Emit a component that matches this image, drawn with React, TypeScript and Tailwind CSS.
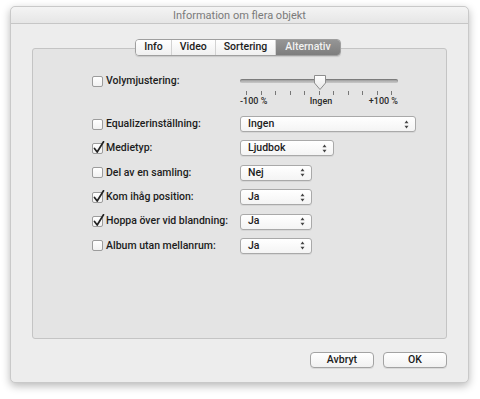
import React from "react";

const font = { fontFamily: "Roboto, 'Liberation Sans', sans-serif" };

function Checkbox({ checked }: { checked?: boolean }) {
  return (
    <span className="relative inline-block h-[11px] w-[11px] shrink-0 rounded-[2px] border border-[#9c9c9c] bg-gradient-to-b from-white to-[#f1f1f1]">
      {checked && (
        <svg className="absolute -top-[3px] left-[0px] h-[13px] w-[12px]" viewBox="0 0 12 13" fill="none">
          <path d="M1.5 7.5 L4.2 11 L10.5 0.8" stroke="#222" strokeWidth="1.7" strokeLinecap="round" strokeLinejoin="round" />
        </svg>
      )}
    </span>
  );
}

function Popup({ value, width }: { value: string; width: string }) {
  return (
    <div className={`flex h-[16px] items-center justify-between rounded-[3px] border border-[#a9a9a9] bg-gradient-to-b from-white to-[#f4f4f4] pl-[7px] pr-[6px] shadow-[0_1px_0_rgba(0,0,0,0.06)] ${width}`}>
      <span className="text-[10.5px] font-medium leading-none text-[#1c1c1c]">{value}</span>
      <svg width="5" height="9" viewBox="0 0 5 9">
        <path d="M2.5 0.5 L4.5 3.3 H0.5 Z" fill="#444" />
        <path d="M2.5 8.5 L4.5 5.7 H0.5 Z" fill="#444" />
      </svg>
    </div>
  );
}

function Row({ label, checked, children }: { label: string; checked?: boolean; children: React.ReactNode }) {
  return (
    <div className="flex h-[16px] items-center">
      <div className="flex w-[148px] items-center gap-[3px]">
        <Checkbox checked={checked} />
        <span className="text-[10.5px] font-medium leading-none text-[#1c1c1c]">{label}</span>
      </div>
      {children}
    </div>
  );
}

function Slider() {
  const ticks = Array.from({ length: 11 });
  return (
    <div className="flex w-[158px] flex-col">
      <div className="relative flex h-[16px] items-center">
        <div className="h-[4px] w-full rounded-full bg-gradient-to-b from-[#9a9a9a] to-[#c8c8c8] shadow-[inset_0_1px_1px_rgba(0,0,0,0.25)]" />
        <svg className="absolute left-[73px] top-[1px]" width="14" height="17" viewBox="0 0 14 17">
          <defs>
            <linearGradient id="thumb" x1="0" y1="0" x2="0" y2="1">
              <stop offset="0" stopColor="#ffffff" />
              <stop offset="1" stopColor="#e6e6e6" />
            </linearGradient>
          </defs>
          <path d="M1.5 1.5 H12.5 V9 L7 15.5 L1.5 9 Z" fill="url(#thumb)" stroke="#8d8d8d" strokeWidth="1" strokeLinejoin="round" />
        </svg>
      </div>
      <div className="mt-[2px] flex justify-between px-[6px]">
        {ticks.map((_, i) => (
          <span key={i} className="h-[4px] w-px bg-[#777]" />
        ))}
      </div>
      <div className="mt-[2px] flex justify-between text-[9px] font-medium leading-none text-[#2a2a2a]">
        <span>-100 %</span>
        <span className="pl-[6px]">Ingen</span>
        <span>+100 %</span>
      </div>
    </div>
  );
}

export default function App() {
  const tabs = ["Info", "Video", "Sortering", "Alternativ"];
  return (
    <div className="h-[399px] w-[480px] bg-white pl-[10px] pt-[6px]" style={font}>
      <div className="flex h-[377px] w-[459px] flex-col rounded-[5px] border border-[#c9c9c9] bg-[#ededed] shadow-[0_3px_9px_rgba(0,0,0,0.28)]">
        <div className="flex h-[17px] items-center justify-center rounded-t-[5px] border-b border-[#c6c6c6] bg-gradient-to-b from-[#f4f4f4] to-[#e6e6e6]">
          <span className="text-[11px] leading-none text-[#7a7a7a]">Information om flera objekt</span>
        </div>

        <div className="flex flex-1 flex-col px-[21px] pt-[24px]">
          <div className="flex h-[291px] flex-col rounded-[3px] border border-[#c4c4c4] bg-[#e4e4e4]">
            <div className="relative z-10 -mt-[10px] flex justify-center pr-[3px]">
              <div className="flex h-[17px] overflow-hidden rounded-[4px] border border-[#9f9f9f] shadow-[0_1px_1px_rgba(0,0,0,0.12)]">
                {tabs.map((t, i) => (
                  <div
                    key={t}
                    className={
                      i === 3
                        ? "flex items-center bg-gradient-to-b from-[#959595] to-[#7e7e7e] px-[9px] text-[10.5px] font-medium leading-none text-[#f2f2f2]"
                        : "flex items-center border-r border-[#d2d2d2] bg-gradient-to-b from-white to-[#f0f0f0] px-[8px] text-[10.5px] font-medium leading-none text-[#1c1c1c] last:border-r-0"
                    }
                  >
                    {t}
                  </div>
                ))}
              </div>
            </div>

            <div className="flex flex-col pl-[59px] pt-[17px]">
              <div className="flex items-start">
                <div className="flex h-[16px] w-[148px] items-center gap-[3px]">
                  <Checkbox />
                  <span className="text-[10.5px] font-medium leading-none text-[#1c1c1c]">Volymjustering:</span>
                </div>
                <Slider />
              </div>

              <div className="mt-[10px] flex flex-col gap-[8.4px]">
                <Row label="Equalizerinställning:">
                  <Popup value="Ingen" width="w-[176px]" />
                </Row>
                <Row label="Medietyp:" checked>
                  <Popup value="Ljudbok" width="w-[94px]" />
                </Row>
                <Row label="Del av en samling:">
                  <Popup value="Nej" width="w-[72px]" />
                </Row>
                <Row label="Kom ihåg position:" checked>
                  <Popup value="Ja" width="w-[72px]" />
                </Row>
                <Row label="Hoppa över vid blandning:" checked>
                  <Popup value="Ja" width="w-[72px]" />
                </Row>
                <Row label="Album utan mellanrum:">
                  <Popup value="Ja" width="w-[72px]" />
                </Row>
              </div>
            </div>
          </div>

          <div className="mt-[13px] flex justify-end gap-[9px]">
            <button className="flex h-[16px] w-[64px] items-center justify-center rounded-[4px] border border-[#a3a3a3] bg-gradient-to-b from-white to-[#f1f1f1] text-[10.5px] font-medium leading-none text-[#1c1c1c] shadow-[0_1px_0_rgba(0,0,0,0.08)]">
              Avbryt
            </button>
            <button className="flex h-[16px] w-[64px] items-center justify-center rounded-[4px] border border-[#a3a3a3] bg-gradient-to-b from-white to-[#f1f1f1] text-[10.5px] font-medium leading-none text-[#1c1c1c] shadow-[0_1px_0_rgba(0,0,0,0.08)]">
              OK
            </button>
          </div>
        </div>
      </div>
    </div>
  );
}
